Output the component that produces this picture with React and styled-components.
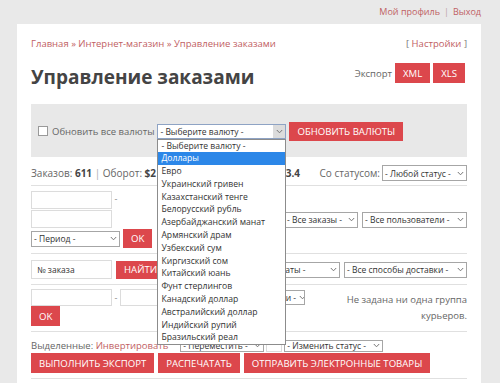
import React from "react";
import styled, { createGlobalStyle } from "styled-components";

const Global = createGlobalStyle`
  html, body { margin: 0; padding: 0; }
  body {
    background: #e9e9e9;
    font-family: "Open Sans", "Noto Sans", sans-serif;
    color: #555;
    width: 500px;
    height: 383px;
    overflow: hidden;
  }
`;

const Page = styled.div`
  padding: 0 19px 0 17px;
`;

const TopBar = styled.div`
  height: 24px;
  display: flex;
  align-items: center;
  justify-content: flex-end;
  font-size: 9px;
  color: #b9a3a3;
  gap: 4px;
  padding-bottom: 1px;
  box-sizing: border-box;
`;

const Link = styled.span`
  color: #bf6063;
`;

const Card = styled.div`
  background: #fff;
  padding: 13px 14px 0;
  min-height: 360px;
`;

const Crumbs = styled.div`
  display: flex;
  justify-content: space-between;
  font-size: 9.5px;
  line-height: 14px;
  color: #bf6063;
`;

const Muted = styled.span`
  color: #777;
`;

const TitleRow = styled.div`
  display: flex;
  justify-content: space-between;
  align-items: flex-start;
  margin-top: 11px;
  height: 30px;
`;

const Title = styled.h1`
  margin: 0;
  font-size: 19px;
  line-height: 30px;
  font-weight: 700;
  color: #444;
`;

const ExportGroup = styled.div`
  display: flex;
  align-items: center;
  gap: 3px;
  font-size: 9.5px;
  color: #666;
  padding-top: 1px;
  margin-right: 2px;
`;

const Button = styled.button`
  border: none;
  background: #dc474c;
  color: #fff;
  font-family: "Open Sans", sans-serif;
  font-size: 9.6px;
  height: ${(p) => p.$h || 20}px;
  padding: 0 ${(p) => p.$px ?? 8}px;
  text-transform: uppercase;
  cursor: pointer;
  white-space: nowrap;
  flex: none;
`;

const Panel = styled.div`
  margin-top: 12px;
  height: 53px;
  background: #e8e8e8;
  display: flex;
  align-items: center;
  padding-left: 7px;
  padding-top: 1px;
  box-sizing: border-box;
  font-size: 9.5px;
  color: #666;
`;

const Check = styled.span`
  width: 8px;
  height: 8px;
  border: 1px solid #999;
  background: #fff;
  margin-right: 4px;
  flex: none;
`;

const SelectWrap = styled.div`
  position: relative;
  margin: 0 3px;
`;

const SelectBox = styled.div`
  display: flex;
  align-items: center;
  justify-content: space-between;
  box-sizing: border-box;
  width: ${(p) => p.$w}px;
  height: ${(p) => p.$h || 16}px;
  border: 1px solid ${(p) => (p.$open ? "#8ea3c4" : "#a6a6a6")};
  background: #fff;
  font-size: 8.5px;
  color: #333;
  padding-left: 2px;
  white-space: nowrap;
  overflow: hidden;
  flex: none;
`;

const Arrow = styled.span`
  display: flex;
  align-items: center;
  justify-content: center;
  width: 12px;
  align-self: stretch;
  background: ${(p) => (p.$open ? "#dcdcdc" : "transparent")};
  flex: none;
`;

const Dropdown = styled.ul`
  position: absolute;
  left: 0;
  top: 15px;
  width: 129px;
  box-sizing: border-box;
  margin: 0;
  padding: 0;
  list-style: none;
  background: #fff;
  border: 1px solid #8c8c8c;
  z-index: 10;
`;

const Option = styled.li`
  height: 12.8px;
  line-height: 12.8px;
  font-size: 8.6px;
  padding-left: 3px;
  color: ${(p) => (p.$active ? "#fff" : "#333")};
  background: ${(p) => (p.$active ? "#2c87e8" : "#fff")};
  white-space: nowrap;
`;

const StatsRow = styled.div`
  margin-top: 7px;
  display: flex;
  justify-content: space-between;
  align-items: center;
  height: 18px;
  font-size: 10px;
  color: #666;
  padding-bottom: 3px;
  border-bottom: 1px solid #e0e0e0;
`;

const Strong = styled.b`
  color: #444;
  font-weight: 700;
`;

const Sep = styled.span`
  color: #aaa;
`;

const Inline = styled.div`
  display: flex;
  align-items: center;
  gap: ${(p) => p.$gap ?? 3}px;
`;

const Block = styled.div`
  display: flex;
  justify-content: space-between;
  align-items: center;
  padding: ${(p) => p.$pt ?? 5}px 0 ${(p) => p.$pb ?? 5}px;
  border-bottom: 1px solid #e0e0e0;
`;

const Column = styled.div`
  display: flex;
  flex-direction: column;
  align-items: flex-start;
  gap: ${(p) => p.$gap ?? 1}px;
`;

const Input = styled.input`
  box-sizing: border-box;
  width: ${(p) => p.$w || 81}px;
  height: ${(p) => p.$h || 18}px;
  border: 1px solid #dcdcdc;
  font-family: "Open Sans", sans-serif;
  font-size: 8.5px;
  color: #333;
  padding: 0 5px;
  outline: none;
  flex: none;
  &::placeholder { color: #333; }
`;

const Dash = styled.span`
  font-size: 9px;
  color: #888;
  width: 8px;
  text-align: center;
  margin-top: ${(p) => p.$mt ?? 0}px;
`;

const Note = styled.div`
  font-size: 9.5px;
  line-height: 16px;
  color: #666;
  text-align: right;
  width: 124px;
  margin-top: 1px;
`;

const SelRow = styled.div`
  display: flex;
  align-items: center;
  height: 13px;
  font-size: 9.5px;
  color: #666;
`;

const Chevron = () => (
  <svg width="7" height="5" viewBox="0 0 7 5">
    <polyline points="0.8,1 3.5,3.8 6.2,1" fill="none" stroke="#777" strokeWidth="1" />
  </svg>
);

const Select = ({ w, h, children, open, style }) => (
  <SelectBox $w={w} $h={h} $open={open} style={style}>
    <span>{children}</span>
    <Arrow $open={open}>
      <Chevron />
    </Arrow>
  </SelectBox>
);

const currencies = [
  "- Выберите валюту -",
  "Доллары",
  "Евро",
  "Украинский гривен",
  "Казахстанский тенге",
  "Белорусский рубль",
  "Азербайджанский манат",
  "Армянский драм",
  "Узбекский сум",
  "Киргизский сом",
  "Китайский юань",
  "Фунт стерлингов",
  "Канадский доллар",
  "Австралийский доллар",
  "Индийский рупий",
  "Бразильский реал",
];

export default function App() {
  return (
    <>
      <Global />
      <Page>
        <TopBar>
          <Link>Мой профиль</Link>
          <span>|</span>
          <Link>Выход</Link>
        </TopBar>
        <Card>
          <Crumbs>
            <span>
              Главная <Link>»</Link> Интернет-магазин <Link>»</Link> Управление заказами
            </span>
            <span>
              <Muted>[</Muted> Настройки <Muted>]</Muted>
            </span>
          </Crumbs>
          <TitleRow>
            <Title>Управление заказами</Title>
            <ExportGroup>
              <span>Экспорт</span>
              <Button $px={8}>XML</Button>
              <Button $px={8}>XLS</Button>
            </ExportGroup>
          </TitleRow>
          <Panel>
            <Check />
            <span>Обновить все валюты</span>
            <SelectWrap>
              <Select w={129} h={15} open>
                - Выберите валюту -
              </Select>
              <Dropdown>
                {currencies.map((c, i) => (
                  <Option key={c} $active={i === 1}>
                    {c}
                  </Option>
                ))}
              </Dropdown>
            </SelectWrap>
            <Button $h={19}>Обновить валюты</Button>
          </Panel>
          <StatsRow>
            <span>
              Заказов: <Strong>611</Strong> <Sep>|</Sep> Оборот: <Strong>$2 268 404.00</Strong>{" "}
              <Sep>|</Sep> Средний: <Strong>$443.4</Strong>
            </span>
            <Inline $gap={2}>
              <span>Со статусом:</span>
              <Select w={85}>- Любой статус -</Select>
            </Inline>
          </StatsRow>
          <Block>
            <Column $gap={1}>
              <Inline $gap={0}>
                <Input />
                <Dash $mt={-4}>-</Dash>
              </Inline>
              <Input />
              <Inline $gap={3}>
                <Select w={89}>- Период -</Select>
                <Button $px={8} $h={19}>OK</Button>
              </Inline>
            </Column>
            <Inline $gap={4}>
              <Select w={74}>- Все заказы -</Select>
              <Select w={105}>- Все пользователи -</Select>
            </Inline>
          </Block>
          <Block $pt={6}>
            <Inline $gap={4}>
              <Input placeholder="№ заказа" $h={19} />
              <Button $h={18}>Найти</Button>
            </Inline>
            <Inline $gap={4}>
              <Select w={132}>- Все способы оплаты -</Select>
              <Select w={123}>- Все способы доставки -</Select>
            </Inline>
          </Block>
          <Block $pt={4} $pb={5}>
            <Column $gap={0}>
              <Inline $gap={0}>
                <Input $h={17} />
                <Dash>-</Dash>
                <Input $h={17} />
                <Select w={102} h={15} style={{ marginLeft: 2 }}>
                  - Все пункты выдачи -
                </Select>
              </Inline>
              <Button $px={8}>OK</Button>
            </Column>
            <Note>Не задана ни одна группа курьеров.</Note>
          </Block>
          <Block $pt={7}>
            <Column $gap={1}>
              <SelRow>
                <span>
                  Выделенные: <Link>Инвертировать</Link>
                </span>
                <Inline $gap={2} style={{ marginLeft: 12 }}>
                  <Select w={84} h={12}>- Переместить -</Select>
                  <Input $w={16} $h={12} />
                  <Select w={99} h={12}>- Изменить статус -</Select>
                </Inline>
              </SelRow>
              <Inline $gap={4}>
                <Button>Выполнить экспорт</Button>
                <Button>Распечатать</Button>
                <Button>Отправить электронные товары</Button>
              </Inline>
            </Column>
          </Block>
        </Card>
      </Page>
    </>
  );
}
